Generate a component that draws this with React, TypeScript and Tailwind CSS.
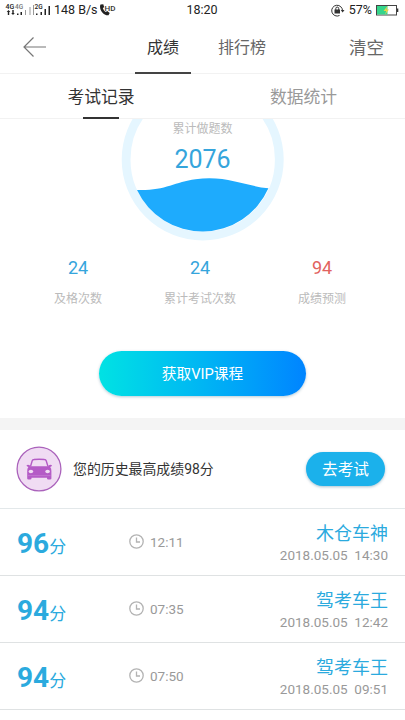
type ExamRecord = { score: number; time: string; title: string; date: string };

const records: ExamRecord[] = [
  { score: 96, time: '12:11', title: '木仓车神', date: '2018.05.05  14:30' },
  { score: 94, time: '07:35', title: '驾考车王', date: '2018.05.05  12:42' },
  { score: 94, time: '07:50', title: '驾考车王', date: '2018.05.05  09:51' },
];

const stats = [
  { value: '24', label: '及格次数', tone: 'text-[#35a5dc]' },
  { value: '24', label: '累计考试次数', tone: 'text-[#35a5dc]' },
  { value: '94', label: '成绩预测', tone: 'text-[#e2635f]' },
];

function SignalIcons() {
  return (
    <svg width="46" height="16" viewBox="0 0 46 16" fill="#222">
      <g fontFamily="Roboto, sans-serif" fontSize="7" fontWeight="500">
        <text x="0.500" y="7">4G</text>
        <text x="10" y="7" fill="#777" fontSize="6.500">4G</text>
        <text x="29.500" y="7" fontSize="6.500">2G</text>
      </g>
      <path d="M3.500 8L5.300 10H4.200V13H2.800V10H1.700zM8 13L6.200 11H7.300V8H8.700V11H9.800z" />
      <path d="M12 11.500h1.500V13H12zM15.500 10H17v3h-1.500z" />
      <path d="M20 8h1v5h-1zM24.500 5h1v8h-1zM28 3h1v10h-1z" fill="#999" />
      <path d="M31 11.500h1.500V13H31zM35.500 10H37v3h-1.500zM39.500 7H41v6h-1.500zM43.500 4H45v9h-1.500z" />
    </svg>
  );
}

function CallHd() {
  return (
    <svg width="18" height="14" viewBox="0 0 18 14">
      <path d="M1.500 1.500C-.5 5.500 4 12.800 9.500 12.300l1.200-2.200-2.500-2-1.400 1C5.300 8 4.200 6.500 3.800 5l1.400-.8-.9-3z" fill="#222" />
      <text x="5.500" y="7.500" fontFamily="Roboto, sans-serif" fontSize="8" fontWeight="500" fill="#333">HD</text>
    </svg>
  );
}

function RotationLock() {
  return (
    <svg width="14" height="13" viewBox="0 0 14 13" fill="none" stroke="#333" strokeWidth="1">
      <path d="M8.500 11.500A5.400 5.400 0 1 1 11.500 7" />
      <path d="M9.800 6h3.700l-1.900 2.500z" fill="#333" stroke="none" />
      <path d="M3.500 5.500h5.500v4H3.500z" fill="#333" stroke="none" />
      <path d="M4.800 6V4.500a1.450 1.450 0 0 1 2.900 0V6" />
    </svg>
  );
}

function Battery() {
  return (
    <svg width="23" height="11" viewBox="0 0 23 11">
      <rect x="0.500" y="0.500" width="20" height="9.500" fill="#fff" stroke="#444" />
      <rect x="1" y="1" width="10.500" height="8.500" fill="#35d58b" />
      <path d="M21 3.500h1.300v3.500H21z" fill="#333" />
      <path d="M11.500 1L7.500 6h2.700L9 9.500l4-5h-2.500z" fill="#e9d34b" />
    </svg>
  );
}

function Gauge() {
  return (
    <svg className="col-start-1 row-start-1" width="164" height="122" viewBox="120.500 119 164 122">
      <circle cx="202.200" cy="159.500" r="76.600" fill="#fff" stroke="#e5f6ff" strokeWidth="8.800" />
      <path d="M136.500 190C164 191 174 182 195 179.200C226 175 244 186 267.900 188.300A72.200 72.200 0 0 1 136.500 190Z" fill="#1eabfd" />
    </svg>
  );
}

function CarBadge() {
  return (
    <svg className="shrink-0" width="46" height="46" viewBox="0 0 46 46">
      <circle cx="23" cy="23" r="21.900" fill="#f0dcf3" stroke="#aa62bb" strokeWidth="1.300" />
      <path d="M14.500 20.500L16.200 14.700Q16.600 13.600 18 13.500Q23 12.900 28.500 13.500Q29.800 13.600 30.200 14.700L32 20.500" fill="none" stroke="#b45bc6" strokeWidth="1.400" />
      <path d="M10.500 19.300Q12 18 14 19.500L14.300 20.300H32.200L32.800 19.300Q34.800 18 36 19.300Q36 20.500 34.200 21.100Q35.500 22.500 35.400 25V32.500Q35.400 33.500 34 33.500H32.400Q31 33.500 31 32.400V31.700H15.500V32.400Q15.500 33.500 14.100 33.500H12.500Q11.200 33.500 11.200 32.500V25Q11.100 22.500 12.400 21.100Q10.500 20.600 10.500 19.300Z" fill="#b45bc6" />
      <ellipse cx="14.900" cy="25.500" rx="2.300" ry="1.700" fill="#f0dcf3" />
      <ellipse cx="31.600" cy="25.500" rx="2.300" ry="1.700" fill="#f0dcf3" />
      <path d="M12 29.600H34.500" stroke="#ca87d5" strokeWidth="0.600" />
    </svg>
  );
}

function Clock() {
  return (
    <svg className="shrink-0" width="15" height="15" viewBox="0 0 15 15" fill="none" stroke="#b3b3b3" strokeWidth="1.300">
      <circle cx="7.500" cy="7.500" r="6.700" />
      <path d="M7.500 3.500V8H11" />
    </svg>
  );
}

function RecordRow({ record }: { record: ExamRecord }) {
  return (
    <div className="flex h-[67px] items-start border-b border-[#dfe2e3] pr-[17px] pl-[17px]">
      <div className="flex w-[112px] items-baseline pt-[15px] leading-10 text-[#2baade]">
        <span className="text-[28px] font-bold">{record.score}</span>
        <span className="text-[17px]">分</span>
      </div>
      <div className="flex items-start gap-[6px] pt-[23px] text-[13.500px] leading-5 text-[#999]">
        <span className="pt-[2px]"><Clock /></span>
        <span>{record.time}</span>
      </div>
      <div className="ml-auto flex flex-col items-end pt-[13px]">
        <span className="text-[18px] leading-6 text-[#2baade]">{record.title}</span>
        <span className="-mt-px text-[13.500px] leading-5 whitespace-pre text-[#999]">{record.date}</span>
      </div>
    </div>
  );
}

export default function App() {
  return (
    <div className="h-[720px] w-[405px] overflow-hidden bg-white font-[Roboto,'Noto_Sans_CJK_SC',sans-serif] text-[#333]">
      <div className="grid h-5 grid-cols-[1fr_auto_1fr] items-center pr-[6px] pl-[5px] text-[12.500px] leading-5 text-[#222]">
        <div className="flex items-center">
          <SignalIcons />
          <span className="ml-[3px] whitespace-nowrap">148 B/s</span>
          <span className="ml-px"><CallHd /></span>
        </div>
        <span>18:20</span>
        <div className="flex items-center justify-end">
          <RotationLock />
          <span className="ml-1">57%</span>
          <span className="ml-1"><Battery /></span>
        </div>
      </div>

      <header className="flex h-[54px] border-b border-[#f2f2f2]">
        <div className="flex w-[135px] items-center pl-[23px]">
          <svg width="24" height="22" viewBox="0 0 24 22" fill="none" stroke="#777" strokeWidth="1.200">
            <path d="M10.500 1.500L1 11l9.500 9.500M1 11h22" />
          </svg>
        </div>
        <div className="flex h-[54px] w-14 justify-center border-b-2 border-[#444] pt-4 text-[16px] leading-6">成绩</div>
        <div className="ml-[27px] pt-4 text-[16px] leading-6 text-[#666]">排行榜</div>
        <div className="ml-auto pt-4 pr-[21px] text-[17.500px] leading-6 text-[#666]">清空</div>
      </header>

      <nav className="flex h-[45px] border-b border-[#f2f2f2] text-[16.800px] leading-6">
        <div className="flex h-[45px] w-[202px] flex-col items-center justify-between pt-[11px]">
          <span>考试记录</span>
          <span className="h-[2px] w-9 bg-[#333]" />
        </div>
        <div className="flex w-[203px] justify-center pt-[11px] text-[#999]">数据统计</div>
      </nav>

      <section className="h-[299px]">
        <div className="grid h-[122px] justify-center">
          <Gauge />
          <div className="z-10 col-start-1 row-start-1 flex flex-col items-center pt-px">
            <span className="text-[12px] leading-[18px] text-[#bbb]">累计做题数</span>
            <span className="mt-[6px] text-[25px] leading-8 text-[#35a5dc]">2076</span>
          </div>
        </div>
        <div className="grid grid-cols-[122px_122px_122px] justify-center pt-[15px] pr-[5px]">
          {stats.map((item) => (
            <div key={item.label} className="flex flex-col items-center">
              <span className={`text-[18px] leading-6 ${item.tone}`}>{item.value}</span>
              <span className="mt-[10px] text-[12px] leading-[18px] text-[#bbb]">{item.label}</span>
            </div>
          ))}
        </div>
        <button className="mx-auto mt-[43px] flex h-[45px] w-[207px] items-center justify-center rounded-full bg-linear-to-r from-[#00e2e3] to-[#0084ff] pt-0.5 text-[14.700px] text-white shadow-[0_1px_3px_rgba(0,80,120,0.3)]">
          获取VIP课程
        </button>
      </section>

      <div className="h-3 bg-[#f4f4f4]" />

      <section className="flex h-[79px] items-center border-b border-[#e3e8ea] pr-5 pl-4">
        <CarBadge />
        <span className="ml-[11px] text-[13.900px]">您的历史最高成绩98分</span>
        <button className="ml-auto flex h-[34px] w-[79px] items-center justify-center rounded-full bg-[#1bb1eb] pt-0.5 text-[15.700px] text-white shadow-[0_1px_3px_rgba(0,80,120,0.35)]">
          去考试
        </button>
      </section>

      {records.map((record) => (
        <RecordRow key={record.date} record={record} />
      ))}
    </div>
  );
}
